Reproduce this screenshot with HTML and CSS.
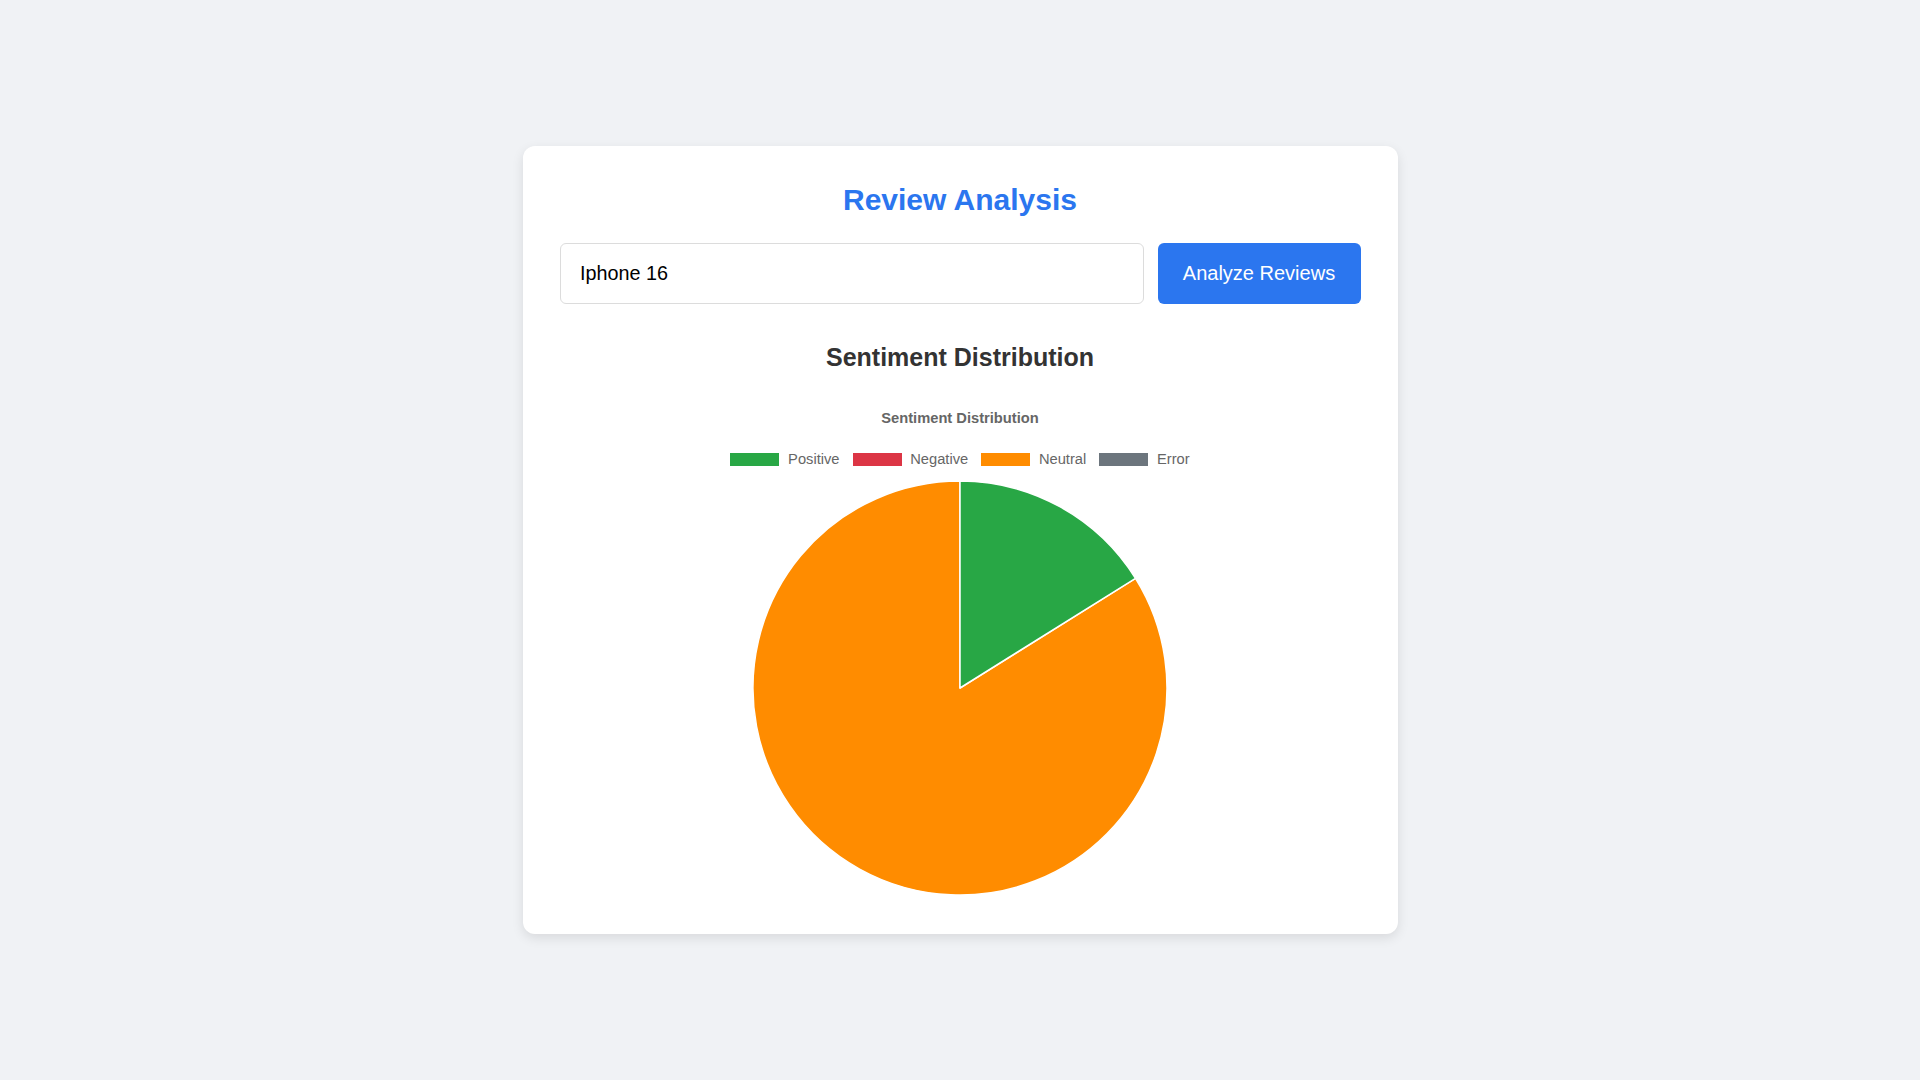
FILE: index.html
```html
<!DOCTYPE html>
<html lang="en">
<head>
<meta charset="utf-8">
<title>Review Analysis</title>
<link rel="stylesheet" href="styles.css">
</head>
<body>
<div class="card">
  <h1 class="title">Review Analysis</h1>
  <div class="search-row">
    <input class="search-input" type="text" value="Iphone 16">
    <button class="analyze-btn">Analyze Reviews</button>
  </div>
  <h2 class="section-title">Sentiment Distribution</h2>
  <div class="chart">
    <div class="chart-title">Sentiment Distribution</div>
    <div class="legend">
      <div class="legend-item"><span class="swatch swatch-positive"></span><span class="legend-label">Positive</span></div>
      <div class="legend-item"><span class="swatch swatch-negative"></span><span class="legend-label">Negative</span></div>
      <div class="legend-item"><span class="swatch swatch-neutral"></span><span class="legend-label">Neutral</span></div>
      <div class="legend-item"><span class="swatch swatch-error"></span><span class="legend-label">Error</span></div>
    </div>
    <svg class="pie" width="416" height="416" viewBox="0 0 416 416">
      <path d="M208 208 L383.5 98.3 A207 207 0 1 1 208 1 Z" fill="#ff8c00" stroke="#ffffff" stroke-width="1.5" stroke-linejoin="round"/>
      <path d="M208 208 L208 1 A207 207 0 0 1 383.5 98.3 Z" fill="#28a745" stroke="#ffffff" stroke-width="1.5" stroke-linejoin="round"/>
    </svg>
  </div>
</div>
</body>
</html>
```
FILE: styles.css
```css
html, body {
  margin: 0;
  padding: 0;
}
body {
  background: #f0f2f5;
  font-family: "Liberation Sans", Arial, sans-serif;
  height: 100vh;
  display: flex;
  align-items: center;
  justify-content: center;
}
.card {
  box-sizing: border-box;
  width: 875px;
  padding: 37px 37px 38px;
  background: #ffffff;
  border-radius: 12px;
  box-shadow: 0 4px 12px rgba(0, 0, 0, 0.1);
  display: flex;
  flex-direction: column;
}
.title {
  margin: 0;
  text-align: center;
  color: #2b76ef;
  font-size: 30px;
  line-height: 34px;
  font-weight: bold;
}
.search-row {
  margin-top: 26.3px;
  display: flex;
  gap: 14px;
  height: 61px;
}
.search-input {
  flex: 1;
  box-sizing: border-box;
  height: 61px;
  margin: 0;
  padding: 0 19.6px;
  border: 1px solid #dcdcdc;
  border-radius: 6px;
  font-family: "Liberation Sans", Arial, sans-serif;
  font-size: 19.8px;
  color: #000;
  outline: none;
}
.analyze-btn {
  box-sizing: border-box;
  height: 61px;
  width: 203px;
  margin: 0;
  padding: 0 24px;
  border: none;
  border-radius: 6px;
  background: #2b76ef;
  color: #ffffff;
  font-family: "Liberation Sans", Arial, sans-serif;
  font-size: 20px;
}
.section-title {
  margin: 38.6px 0 0;
  text-align: center;
  color: #333333;
  font-size: 25px;
  line-height: 28px;
  font-weight: bold;
}
.chart {
  display: flex;
  flex-direction: column;
  align-items: center;
}
.chart-title {
  margin-top: 38.8px;
  font-size: 14.7px;
  line-height: 17px;
  font-weight: bold;
  color: #666666;
}
.legend {
  margin-top: 24px;
  display: flex;
  gap: 13px;
  height: 17px;
  align-items: center;
}
.legend-item {
  display: flex;
  align-items: center;
  gap: 8.7px;
}
.swatch {
  display: block;
  width: 49px;
  height: 13.4px;
  box-sizing: border-box;
}
.swatch-positive { background: #28a745; }
.swatch-negative { background: #dc3545; }
.swatch-neutral { background: #ff8c00; }
.swatch-error { background: #6c757d; }
.legend-label {
  font-size: 14.7px;
  line-height: 17px;
  color: #666666;
}
.pie {
  display: block;
  margin-top: 12.2px;
}
```
